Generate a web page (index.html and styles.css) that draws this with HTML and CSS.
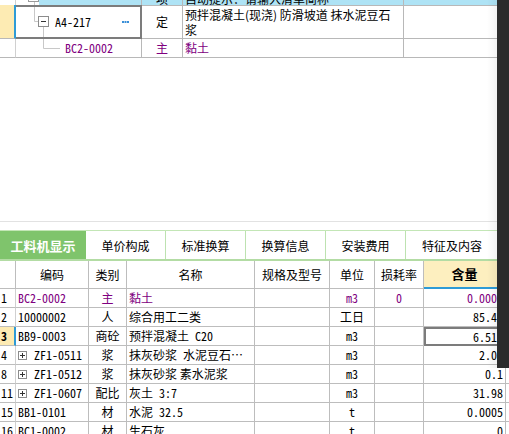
FILE: index.html
```html
<!DOCTYPE html>
<html lang="zh-CN">
<head>
<meta charset="utf-8">
<title>工料机显示</title>
<link rel="stylesheet" href="styles.css">
</head>
<body>
<div class="page">
  <div class="tree">
    <div class="tc r0 g"></div>
    <div class="tc r0 code0">
      <svg class="stub" width="40" height="5" viewBox="0 0 40 5"><rect x="12.5" y="-8.5" width="10" height="10" fill="#fff" stroke="#9a9a9a"/><line x1="18.5" y1="2" x2="18.5" y2="5" stroke="#c8c8c8"/></svg>
    </div>
    <div class="tc r0 ctr"><span class="cut">项</span></div>
    <div class="tc r0 pad"><span class="cut">自动提示：请输入清单简称</span></div>
    <div class="tc r0"></div>

    <div class="tc r1 g sel"></div>
    <div class="tc r1 focus m">
      <svg class="tl" width="39" height="30" viewBox="0 0 39 30"><line x1="18.5" y1="0" x2="18.5" y2="14.5" stroke="#c8c8c8"/><line x1="18.5" y1="14.5" x2="22" y2="14.5" stroke="#c8c8c8"/><line x1="27.5" y1="20" x2="27.5" y2="30" stroke="#c8c8c8"/><rect x="22.5" y="9.5" width="10" height="10" fill="#fff" stroke="#8c8c8c"/><line x1="25" y1="14.5" x2="30" y2="14.5" stroke="#333"/></svg>
      <span>A4-217</span>
      <svg class="dots" width="7" height="2" viewBox="0 0 7 2"><rect x="0" y="0" width="2" height="2" fill="#3a8fd8"/><rect x="2.5" y="0" width="2" height="2" fill="#3a8fd8"/><rect x="5" y="0" width="2" height="2" fill="#3a8fd8"/></svg>
    </div>
    <div class="tc r1 ctr">定</div>
    <div class="tc r1 pad two">预拌混凝土(现浇) 防滑坡道 抹水泥豆石<br>浆</div>
    <div class="tc r1"></div>

    <div class="tc g"></div>
    <div class="tc m p">
      <svg class="tl" width="49" height="18" viewBox="0 0 49 18"><line x1="27.5" y1="0" x2="27.5" y2="9.5" stroke="#c8c8c8"/><line x1="27.5" y1="9.5" x2="44" y2="9.5" stroke="#c8c8c8"/></svg>
      <span>BC2-0002</span>
    </div>
    <div class="tc ctr p">主</div>
    <div class="tc pad p">黏土</div>
    <div class="tc"></div>
  </div>

  <div class="blank"></div>
  <div class="sep"></div>

  <div class="tabs">
    <div class="tab on">工料机显示</div>
    <div class="tab">单价构成</div>
    <div class="tab">标准换算</div>
    <div class="tab">换算信息</div>
    <div class="tab">安装费用</div>
    <div class="tab last">特征及内容</div>
  </div>

  <div class="grid">
    <div class="c h"></div>
    <div class="c h">编码</div>
    <div class="c h">类别</div>
    <div class="c h">名称</div>
    <div class="c h">规格及型号</div>
    <div class="c h">单位</div>
    <div class="c h">损耗率</div>
    <div class="c h hl">含量</div>
    <div class="c h"></div>

    <div class="c n m">1</div>
    <div class="c m p">BC2-0002</div>
    <div class="c ctr p">主</div>
    <div class="c p">黏土</div>
    <div class="c"></div>
    <div class="c ctr m p">m3</div>
    <div class="c ctr m p">0</div>
    <div class="c num m p">0.0000</div>
    <div class="c"></div>

    <div class="c n m">2</div>
    <div class="c m">10000002</div>
    <div class="c ctr">人</div>
    <div class="c">综合用工二类</div>
    <div class="c"></div>
    <div class="c ctr">工日</div>
    <div class="c"></div>
    <div class="c num m">85.45</div>
    <div class="c"></div>

    <div class="c n m cur">3</div>
    <div class="c m">BB9-0003</div>
    <div class="c ctr">商砼</div>
    <div class="c m">预拌混凝土 C20</div>
    <div class="c"></div>
    <div class="c ctr m">m3</div>
    <div class="c"></div>
    <div class="c num m focus2">6.515</div>
    <div class="c"></div>

    <div class="c n m">4</div>
    <div class="c m"><svg class="plus" width="9" height="9" viewBox="0 0 9 9"><rect x="0.5" y="0.5" width="8" height="8" fill="#fff" stroke="#8c8c8c"/><line x1="2" y1="4.5" x2="7" y2="4.5" stroke="#333"/><line x1="4.5" y1="2" x2="4.5" y2="7" stroke="#333"/></svg>ZF1-0511</div>
    <div class="c ctr">浆</div>
    <div class="c m">抹灰砂浆 水泥豆石…</div>
    <div class="c"></div>
    <div class="c ctr m">m3</div>
    <div class="c"></div>
    <div class="c num m">2.04</div>
    <div class="c"></div>

    <div class="c n m">8</div>
    <div class="c m"><svg class="plus" width="9" height="9" viewBox="0 0 9 9"><rect x="0.5" y="0.5" width="8" height="8" fill="#fff" stroke="#8c8c8c"/><line x1="2" y1="4.5" x2="7" y2="4.5" stroke="#333"/><line x1="4.5" y1="2" x2="4.5" y2="7" stroke="#333"/></svg>ZF1-0512</div>
    <div class="c ctr">浆</div>
    <div class="c">抹灰砂浆 素水泥浆</div>
    <div class="c"></div>
    <div class="c ctr m">m3</div>
    <div class="c"></div>
    <div class="c num m">0.1</div>
    <div class="c"></div>

    <div class="c n m">11</div>
    <div class="c m"><svg class="plus" width="9" height="9" viewBox="0 0 9 9"><rect x="0.5" y="0.5" width="8" height="8" fill="#fff" stroke="#8c8c8c"/><line x1="2" y1="4.5" x2="7" y2="4.5" stroke="#333"/><line x1="4.5" y1="2" x2="4.5" y2="7" stroke="#333"/></svg>ZF1-0607</div>
    <div class="c ctr">配比</div>
    <div class="c m">灰土 3:7</div>
    <div class="c"></div>
    <div class="c ctr m">m3</div>
    <div class="c"></div>
    <div class="c num m">31.98</div>
    <div class="c"></div>

    <div class="c n m">15</div>
    <div class="c m">BB1-0101</div>
    <div class="c ctr">材</div>
    <div class="c m">水泥 32.5</div>
    <div class="c"></div>
    <div class="c ctr m">t</div>
    <div class="c"></div>
    <div class="c num m">0.0005</div>
    <div class="c"></div>

    <div class="c n m">16</div>
    <div class="c m">BC1-0002</div>
    <div class="c ctr">材</div>
    <div class="c">生石灰</div>
    <div class="c"></div>
    <div class="c ctr m">t</div>
    <div class="c"></div>
    <div class="c num m">0</div>
    <div class="c"></div>
  </div>

  <div class="shade"></div>
</div>
</body>
</html>
```

FILE: styles.css
```css
* { box-sizing: border-box; margin: 0; padding: 0; }
html, body { width: 509px; height: 434px; overflow: hidden; background: #fff; }
body {
  font-family: "Noto Sans CJK SC", "Noto Sans", sans-serif;
  font-size: 12px;
  color: #000;
}
.page {
  position: relative;
  width: 509px;
  height: 434px;
  overflow: hidden;
  display: flex;
  flex-direction: column;
  align-items: flex-start;
}
.m { font-family: "Noto Sans Mono CJK SC", "Liberation Mono", monospace; }
.p { color: #800080; }

/* upper tree grid */
.tree {
  flex: none;
  display: grid;
  grid-template-columns: 16px 126px 41px 221px 120px;
  grid-template-rows: 5px 34px 19px;
  width: 524px;
}
.tc {
  display: flex;
  align-items: center;
  overflow: hidden;
  white-space: nowrap;
  border-right: 1px solid #b8b8b8;
  border-bottom: 1px solid #b8b8b8;
  line-height: 16px;
}
.tc.ctr { justify-content: center; }
.tc.pad { padding-left: 2px; }
.r0 {
  background: #aee3f5;
  border-bottom: none;
  align-items: flex-end;
  line-height: 12px;
}
.r0.g { background: #fff; border-right-color: #e0e0e0; }
.r0.code0 { background: linear-gradient(to right, #fff 23px, #aee3f5 23px); }
.r0 .cut { display: block; }
.stub { display: block; flex: none; }
.r1 { border-top: 1px solid #b8b8b8; }
.tc.g { border-right-color: #d0d0d0; }
.tc.sel {
  background: #fdebb3;
  border-top: none;
  border-right: 2px solid #2e9bd6;
}
.tc.focus {
  border: 2px solid #7c7c7c;
  border-left: none;
}
.tl { display: block; flex: none; align-self: stretch; }
.dots { display: block; flex: none; margin-left: auto; margin-right: 11px; }
.two { white-space: normal; line-height: 15px; }

.blank { flex: none; height: 163px; }
.sep { flex: none; width: 497px; height: 1px; background: #e2e2e2; }

/* tabs */
.tabs {
  flex: none;
  display: flex;
  margin-top: 8px;
  width: 509px;
  height: 31px;
  border-top: 1px solid #c3e6b6;
  border-bottom: 2px solid #b3dca4;
}
.tab {
  flex: none;
  width: 80px;
  display: flex;
  align-items: center;
  justify-content: center;
  border-right: 1px solid #bde2b0;
  font-size: 12px;
}
.tab.on {
  width: 86px;
  background: #7fc46c;
  color: #fff;
  font-weight: bold;
  font-size: 13px;
  border-right: none;
}
.tab.last { width: 92px; border-right: none; }

/* lower grid */
.grid {
  flex: none;
  display: grid;
  grid-template-columns: 16px 73px 38px 128px 75px 45px 49px 82px 40px;
  grid-template-rows: 28px;
  grid-auto-rows: 19px;
  width: 546px;
}
.c {
  display: flex;
  align-items: center;
  white-space: nowrap;
  overflow: hidden;
  padding: 0 2px;
  border-right: 1px solid #bdbdbd;
  border-bottom: 1px solid #bdbdbd;
  line-height: 16px;
}
.c.h { justify-content: center; }
.c.hl {
  background: #fdefbf;
  border-bottom: 2px solid #2e9bd6;
  font-weight: bold;
  font-size: 13px;
}
.c.ctr { justify-content: center; }
.c.num { justify-content: flex-end; padding-right: 2px; }
.c.n { padding-left: 1px; border-right-color: #d0d0d0; }
.c.cur {
  background: #fdebb3;
  font-weight: bold;
  border-right: 2px solid #2e9bd6;
}
.c.focus2 { border: 2px solid #7c7c7c; padding-right: 1px; }
.plus { display: block; flex: none; margin-right: 7px; }

/* dark window edge on the right */
.shade {
  position: absolute;
  top: 0;
  right: 0;
  width: 22px;
  height: 368px;
  background: linear-gradient(to right, rgba(0,0,0,0) 0, rgba(0,0,0,0.05) 10px, #2b2b2b 10px, #2b2b2b 100%);
}
```
